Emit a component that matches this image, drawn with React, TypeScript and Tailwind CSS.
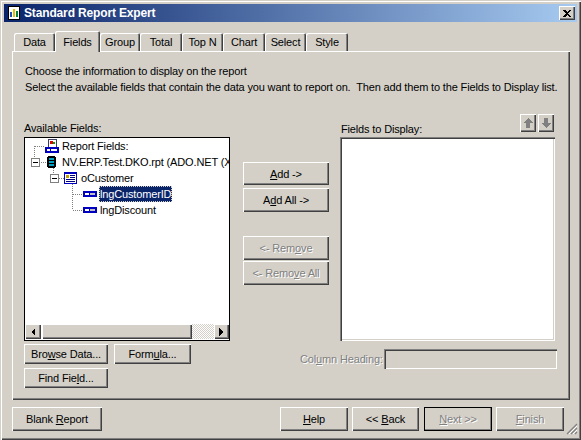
import type { ReactNode } from "react";

const RAISED = "shadow-[inset_1px_1px_0_#ffffff,inset_-1px_-1px_0_#404040,inset_-2px_-2px_0_#808080]";
const SUNKEN = "shadow-[inset_1px_1px_0_#808080,inset_2px_2px_0_#404040,inset_-1px_-1px_0_#ffffff,inset_-2px_-2px_0_#d4d0c8]";
const DISABLED = "text-[#808080] [text-shadow:1px_1px_0_#ffffff]";

const TABS = [
  { label: "Data", width: "w-[41px]" },
  { label: "Fields", width: "w-[45px]", active: true },
  { label: "Group", width: "w-[40px]" },
  { label: "Total", width: "w-[42px]" },
  { label: "Top N", width: "w-[41px]" },
  { label: "Chart", width: "w-[42px]" },
  { label: "Select", width: "w-[41px]" },
  { label: "Style", width: "w-[42px]" },
];

function Button({ children, className, disabled }: { children: ReactNode; className: string; disabled?: boolean }) {
  return (
    <div className={`flex items-center justify-center ${RAISED} ${disabled ? DISABLED : "text-black"} ${className}`}>
      <span>{children}</span>
    </div>
  );
}

function Dots({ d }: { d: string }) {
  return <path d={d} stroke="#808080" strokeDasharray="1 1" fill="none" />;
}

function Expander({ x, y }: { x: number; y: number }) {
  return (
    <g>
      <rect x={x + 0.5} y={y + 0.5} width="8" height="8" fill="#fff" stroke="#808080" />
      <path d={`M${x + 2} ${y + 4.5}h5`} stroke="#000" />
    </g>
  );
}

function FieldIcon({ y }: { y: number }) {
  return (
    <g>
      <rect x="83" y={y} width="14" height="6" fill="#0000c0" />
      <rect x="85" y={y + 2} width="4" height="2" fill="#ffffff" />
      <rect x="90" y={y + 2} width="5" height="2" fill="#c0c0c0" />
    </g>
  );
}

function TreeRow({ top, width, children, label, selected }: { top: number; width: number; children: ReactNode; label: string; selected?: boolean }) {
  return (
    <div className="flex h-4 items-center">
      <svg width={width} height="16" viewBox={`25 ${top} ${width} 16`} shapeRendering="crispEdges" className="shrink-0">
        {children}
      </svg>
      {selected ? (
        <span className="ml-[-1px] h-4 bg-[#0a246a] px-px leading-4 text-white outline-1 outline-dotted outline-offset-[-1px] outline-[#d4d0c8]">{label}</span>
      ) : (
        <span className="whitespace-nowrap leading-4">{label}</span>
      )}
    </div>
  );
}

function Arrow({ dir }: { dir: "left" | "right" }) {
  return (
    <svg width="5" height="8" viewBox="0 0 5 8" shapeRendering="crispEdges">
      <path d={dir === "left" ? "M4 0v8L0 4z" : "M0 0v8L4 4z"} fill="#000" />
    </svg>
  );
}

function Tree() {
  return (
    <div className="h-[186px] overflow-hidden">
      <TreeRow top={138} width={37} label="Report Fields:">
        <Dots d="M34.5 146V154M35 146.500H45" />
        <rect x="48.500" y="139.500" width="8" height="8" fill="#fff" stroke="#404060" />
        <rect x="50" y="141" width="3" height="3" fill="#e00000" />
        <rect x="53" y="142" width="2" height="2" fill="#00a000" />
        <rect x="45" y="147" width="14" height="6" fill="#0000c0" />
        <rect x="47" y="149" width="3" height="2" fill="#ffffff" />
        <rect x="51" y="149" width="6" height="2" fill="#ffffff" />
      </TreeRow>
      <TreeRow top={154} width={37} label="NV.ERP.Test.DKO.rpt (ADO.NET (X">
        <Dots d="M34.500 154V158M39 162.500H46M53.500 168V170" />
        <Expander x={31} y={158} />
        <rect x="47" y="156" width="9" height="12" rx="3" fill="#000" />
        <rect x="49" y="158" width="5" height="2" fill="#00a0c0" />
        <rect x="49" y="161" width="5" height="2" fill="#00a0c0" />
        <rect x="49" y="164" width="5" height="2" fill="#00a0c0" />
      </TreeRow>
      <TreeRow top={170} width={56} label="oCustomer">
        <Dots d="M53.500 170V174M59 178.500H64M72.500 184V186" />
        <Expander x={50} y={174} />
        <rect x="64" y="172" width="13" height="12" fill="#0000c0" />
        <rect x="65" y="174" width="11" height="9" fill="#ffffff" />
        <rect x="66" y="175" width="3" height="3" fill="#c0a000" />
        <path d="M70 175.500h5M70 177.500h5M66 179.500h9M66 181.500h9" stroke="#000080" />
      </TreeRow>
      <TreeRow top={186} width={75} label="lngCustomerID" selected>
        <Dots d="M72.500 186V202M73 194.500H83" />
        <FieldIcon y={191} />
      </TreeRow>
      <TreeRow top={202} width={75} label="lngDiscount">
        <Dots d="M72.500 202V210M73 210.500H83" />
        <FieldIcon y={207} />
      </TreeRow>
    </div>
  );
}

function Scrollbar() {
  return (
    <div className="flex h-[15px] w-[204px]">
      <div className={`flex w-4 shrink-0 items-center justify-center bg-[#d4d0c8] ${RAISED}`}>
        <Arrow dir="left" />
      </div>
      <div className={`ml-px w-[150px] shrink-0 bg-[#d4d0c8] ${RAISED}`} />
      <div className="flex-1 bg-[repeating-conic-gradient(#ffffff_0_25%,#d4d0c8_0_50%)] bg-[length:2px_2px]" />
      <div className={`flex w-[15px] shrink-0 items-center justify-center bg-[#d4d0c8] ${RAISED}`}>
        <Arrow dir="right" />
      </div>
    </div>
  );
}

function SmallArrowButton({ down, className }: { down?: boolean; className?: string }) {
  return (
    <div className={`flex h-[18px] w-4 items-center justify-center ${RAISED} ${className ?? ""}`}>
      <svg width="10" height="10" viewBox="0 0 10 10" shapeRendering="crispEdges">
        <path
          d={down ? "M3 0h4v5h3L5 10 0 5h3z" : "M3 10h4V5h3L5 0 0 5h3z"}
          fill="#808080"
        />
      </svg>
    </div>
  );
}

export default function App() {
  return (
    <div className="flex h-[440px] w-[581px] flex-col overflow-hidden bg-[#d4d0c8] px-1 pt-1 font-['Liberation_Sans',Arial,sans-serif] text-[11px] leading-4 tracking-[-0.15px] text-black shadow-[inset_1px_1px_0_#d4d0c8,inset_2px_2px_0_#ffffff,inset_-1px_-1px_0_#404040,inset_-2px_-2px_0_#808080]">
      {/* title bar */}
      <div className="flex h-[18px] w-[573px] items-center bg-[linear-gradient(90deg,#0a246a,#a6caf0)] pl-1 pr-[2px]">
        <svg width="12" height="14" viewBox="0 0 12 14" shapeRendering="crispEdges" className="shrink-0">
          <rect x="0.5" y="0.5" width="11" height="13" fill="#fff" stroke="#000" />
          <rect x="2" y="6" width="2" height="5" fill="#2050c0" />
          <rect x="5" y="3" width="2" height="8" fill="#e0c000" />
          <rect x="8" y="5" width="2" height="6" fill="#008040" />
        </svg>
        <span className="ml-1 text-[12px] font-bold leading-[18px] text-white">Standard Report Expert</span>
        <div className={`ml-auto flex h-[14px] w-4 items-center justify-center bg-[#d4d0c8] ${RAISED}`}>
          <svg width="8" height="7" viewBox="0 0 8 7" shapeRendering="crispEdges">
            <path d="M0 0h2l2 2 2-2h2L5 3.500 8 7H6L4 5 2 7H0l3-3.500z" fill="#000" />
          </svg>
        </div>
      </div>

      {/* tabs */}
      <div className="z-10 ml-[10px] mt-[9px] flex h-[20px] items-end">
        {TABS.map((tab) => (
          <div
            key={tab.label}
            className={`flex items-center justify-center bg-[#d4d0c8] ${tab.width} ${
              tab.active
                ? "-mb-px h-[21px] rounded-t-[2px] shadow-[inset_1px_1px_0_#ffffff,inset_-1px_0_0_#404040,inset_-2px_0_0_#808080]"
                : "h-[18px] rounded-t-[2px] shadow-[inset_1px_1px_0_#ffffff,inset_-1px_0_0_#404040,inset_-2px_0_0_#808080]"
            }`}
          >
            {tab.label}
          </div>
        ))}
      </div>

      {/* page */}
      <div className="ml-2 h-[349px] w-[558px] px-3 pt-3 shadow-[inset_1px_1px_0_#ffffff,inset_-1px_-1px_0_#404040,inset_-2px_-2px_0_#808080]">
        <p className="pl-px">Choose the information to display on the report</p>
        <p className="whitespace-nowrap pl-px">
          Select the available fields that contain the data you want to report on.&nbsp; Then add them to the Fields to Display list.
        </p>

        <div className="mt-[25px] flex">
          {/* available fields */}
          <div className="w-[206px] shrink-0">
            <div className="h-[17px]">Available Fields:</div>
            <div className="h-[204px] border border-black bg-white">
              <Tree />
              <Scrollbar />
            </div>
            <div className="mt-[3px] flex gap-[6px]">
              <Button className="h-[20px] w-[84px]">Bro<u>w</u>se Data...</Button>
              <Button className="h-[20px] w-[77px]">Form<u>u</u>la...</Button>
            </div>
            <Button className="mt-1 h-[20px] w-[84px]">Find Fie<u>l</u>d...</Button>
          </div>

          {/* add / remove */}
          <div className="ml-[13px] w-[86px] shrink-0 pt-[42px]">
            <Button className="h-[23px]"><u>A</u>dd -&gt;</Button>
            <Button className="mt-[3px] h-[24px]">A<u>d</u>d All -&gt;</Button>
            <Button className="mt-[24px] h-[24px]" disabled>&lt;- Rem<u>o</u>ve</Button>
            <Button className="mt-px h-[24px]" disabled>&lt;- Remo<u>v</u>e All</Button>
          </div>

          {/* fields to display */}
          <div className="ml-[11px] w-[215px] shrink-0">
            <div className="-mt-[6px] flex h-[23px] items-end justify-between">
              <span className="pl-px">Fields to Display:</span>
              <div className="mb-[5px] mr-px flex gap-[2px]">
                <SmallArrowButton />
                <SmallArrowButton down />
              </div>
            </div>
            <div className={`h-[204px] bg-white ${SUNKEN}`} />
            <div className="-ml-10 mt-2 flex w-[257px] items-center">
              <span className={`w-[84px] whitespace-nowrap ${DISABLED}`}>Col<u>u</u>mn Heading:</span>
              <div className={`h-[20px] w-[173px] ${SUNKEN}`} />
            </div>
          </div>
        </div>
      </div>

      {/* footer */}
      <div className="ml-2 mt-[7px] flex w-[552px]">
        <Button className="h-6 w-[90px]">Blank <u>R</u>eport</Button>
        <div className="ml-auto flex gap-1">
          <Button className="h-6 w-[68px]"><u>H</u>elp</Button>
          <Button className="h-6 w-[67px]">&lt;&lt; <u>B</u>ack</Button>
          <Button className="ml-px h-6 w-[68px] outline-1 -outline-offset-1 outline-black" disabled><u>N</u>ext &gt;&gt;</Button>
          <Button className="h-6 w-[68px]" disabled><u>F</u>inish</Button>
        </div>
      </div>

      {/* resize grip */}
      <div className="mr-[-1px] mt-[-8px] self-end">
        <svg width="12" height="12" viewBox="0 0 12 12" className="block">
          <path d="M11 1 1 11M11 5 5 11M11 9 9 11" stroke="#808080" strokeWidth="1.2" />
          <path d="M11 3 3 11M11 7 7 11" stroke="#ffffff" />
        </svg>
      </div>
    </div>
  );
}
